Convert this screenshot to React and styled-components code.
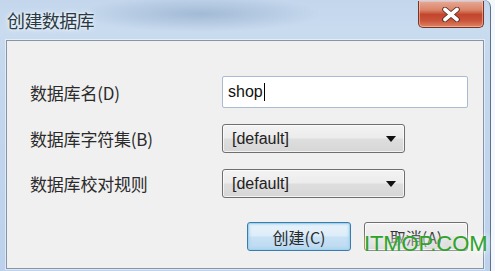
import React from "react";
import styled, { createGlobalStyle } from "styled-components";

const Global = createGlobalStyle`
  html, body { margin: 0; padding: 0; background: #ffffff; }
  body { width: 495px; height: 271px; overflow: hidden; }
`;

const Page = styled.div`
  position: relative;
  width: 495px;
  height: 271px;
  overflow: hidden;
  background: #f4f7fb;
`;

const Window = styled.div`
  width: 491px;
  height: 271px;
  display: flex;
  flex-direction: column;
  box-sizing: border-box;
  border-right: 1px solid #5d7189;
  border-top-right-radius: 7px;
  background:
    radial-gradient(ellipse 120px 18px at 200px 14px, rgba(120,150,185,0.45), rgba(120,150,185,0) 100%),
    linear-gradient(180deg, #c3d6ec 0px, #c9dbef 30px, #c4d8ee 60px, #bcd2ec 271px);
`;

const TitleBar = styled.div`
  height: 40px;
  flex: 0 0 40px;
  display: flex;
  align-items: flex-start;
  justify-content: space-between;
  padding-left: 7px;
  padding-right: 6px;
  box-sizing: border-box;
`;

const Title = styled.div`
  margin-top: 9px;
  font-family: "Noto Sans CJK SC", sans-serif;
  font-size: 18px;
  line-height: 22px;
  color: #2a3a44;
  letter-spacing: -0.6px;
  text-shadow: 0 0 6px rgba(255,255,255,0.9), 0 0 3px rgba(255,255,255,0.8);
`;

const CloseButton = styled.div`
  margin-top: 1px;
  width: 66px;
  height: 27px;
  box-sizing: border-box;
  border: 1px solid #7a3426;
  border-top: none;
  border-radius: 0 0 5px 5px;
  display: flex;
  align-items: center;
  justify-content: center;
  background: linear-gradient(180deg, #e9a996 0%, #d98468 35%, #c3452d 52%, #c9543a 75%, #dd8563 100%);
  box-shadow: inset 0 0 0 1px rgba(255,210,190,0.5);
`;

const Client = styled.div`
  flex: 1;
  margin: 0 6px 2px 6px;
  border: 1px solid #8694a5;
  box-shadow: 0 0 0 1px rgba(255,255,255,0.5);
  background: #f0f0f0;
  padding: 35px 0 0 23px;
  display: flex;
  flex-direction: column;
`;

const Row = styled.div`
  display: flex;
  align-items: center;
  height: ${p => p.$h}px;
  margin-bottom: ${p => p.$gap}px;
`;

const Label = styled.div`
  width: 192px;
  font-family: "Noto Sans CJK SC", sans-serif;
  font-size: 17px;
  color: #2b2b2b;
  letter-spacing: -0.2px;
`;

const TextInput = styled.div`
  width: 246px;
  height: 32px;
  box-sizing: border-box;
  border: 1px solid #a9bcd2;
  border-radius: 2px;
  background: #ffffff;
  display: flex;
  align-items: center;
  padding-left: 5px;
  font-family: "Liberation Sans", Arial, sans-serif;
  font-size: 16px;
  color: #111;
`;

const Caret = styled.span`
  display: inline-block;
  width: 1px;
  height: 18px;
  margin-left: 1px;
  background: #000;
`;

const Select = styled.div`
  width: 183px;
  height: 29px;
  box-sizing: border-box;
  border: 1px solid #6f6f6f;
  border-radius: 3px;
  display: flex;
  align-items: center;
  justify-content: space-between;
  padding: 0 8px 0 9px;
  background: linear-gradient(180deg, #f3f3f3 0%, #ececec 48%, #dedede 52%, #d6d6d6 100%);
  box-shadow: inset 0 0 0 1px rgba(255,255,255,0.7);
  font-family: "Liberation Sans", Arial, sans-serif;
  font-size: 16px;
  color: #222;
`;

const ButtonRow = styled.div`
  display: flex;
  gap: 13px;
  padding-left: 217px;
`;

const Button = styled.div`
  width: 104px;
  height: 29px;
  box-sizing: border-box;
  border: 1px solid ${p => (p.$primary ? "#3d7bad" : "#707070")};
  border-radius: 3px;
  display: flex;
  align-items: center;
  justify-content: center;
  background: ${p =>
    p.$primary
      ? "linear-gradient(180deg, #eaf4fb 0%, #dcecf8 48%, #c8e1f4 52%, #bcdaf1 100%)"
      : "linear-gradient(180deg, #f2f2f2 0%, #ebebeb 48%, #dddddd 52%, #cfcfcf 100%)"};
  box-shadow: ${p =>
    p.$primary ? "inset 0 0 0 1px #9fd4f0, inset 0 0 2px 2px rgba(160,210,240,0.5)" : "inset 0 0 0 1px rgba(255,255,255,0.7)"};
  font-family: "Noto Sans CJK SC", sans-serif;
  font-size: 16px;
  color: #2b2b2b;
`;

const Watermark = styled.div`
  position: absolute;
  left: 364px;
  top: 232px;
  font-family: "Liberation Sans", Arial, sans-serif;
  font-size: 22px;
  line-height: 24px;
  color: #2ea32a;
  letter-spacing: -0.1px;
  text-shadow: 0 0 6px rgba(255,255,255,0.9), 0 2px 8px rgba(255,255,255,0.9);
`;

const Arrow = () => (
  <svg width="10" height="6" viewBox="0 0 10 6">
    <path d="M0 0 L10 0 L5 6 Z" fill="#111" />
  </svg>
);

const CloseX = () => (
  <svg width="22" height="15" viewBox="0 0 22 15">
    <path d="M5 2.5 L17 12.5 M17 2.5 L5 12.5" stroke="#5a2a22" strokeWidth="5.5" strokeLinecap="round" />
    <path d="M5 2.5 L17 12.5 M17 2.5 L5 12.5" stroke="#ffffff" strokeWidth="3.6" strokeLinecap="round" />
  </svg>
);

export default function App() {
  return (
    <>
      <Global />
      <Page>
        <Window>
          <TitleBar>
            <Title>创建数据库</Title>
            <CloseButton>
              <CloseX />
            </CloseButton>
          </TitleBar>
          <Client>
            <Row $h={32} $gap={16}>
              <Label>数据库名(D)</Label>
              <TextInput>
                shop<Caret />
              </TextInput>
            </Row>
            <Row $h={29} $gap={16}>
              <Label>数据库字符集(B)</Label>
              <Select>
                <span>[default]</span>
                <Arrow />
              </Select>
            </Row>
            <Row $h={29} $gap={24}>
              <Label>数据库校对规则</Label>
              <Select>
                <span>[default]</span>
                <Arrow />
              </Select>
            </Row>
            <ButtonRow>
              <Button $primary>创建(C)</Button>
              <Button>取消(A)</Button>
            </ButtonRow>
          </Client>
        </Window>
        <Watermark>ITMOP.COM</Watermark>
      </Page>
    </>
  );
}
